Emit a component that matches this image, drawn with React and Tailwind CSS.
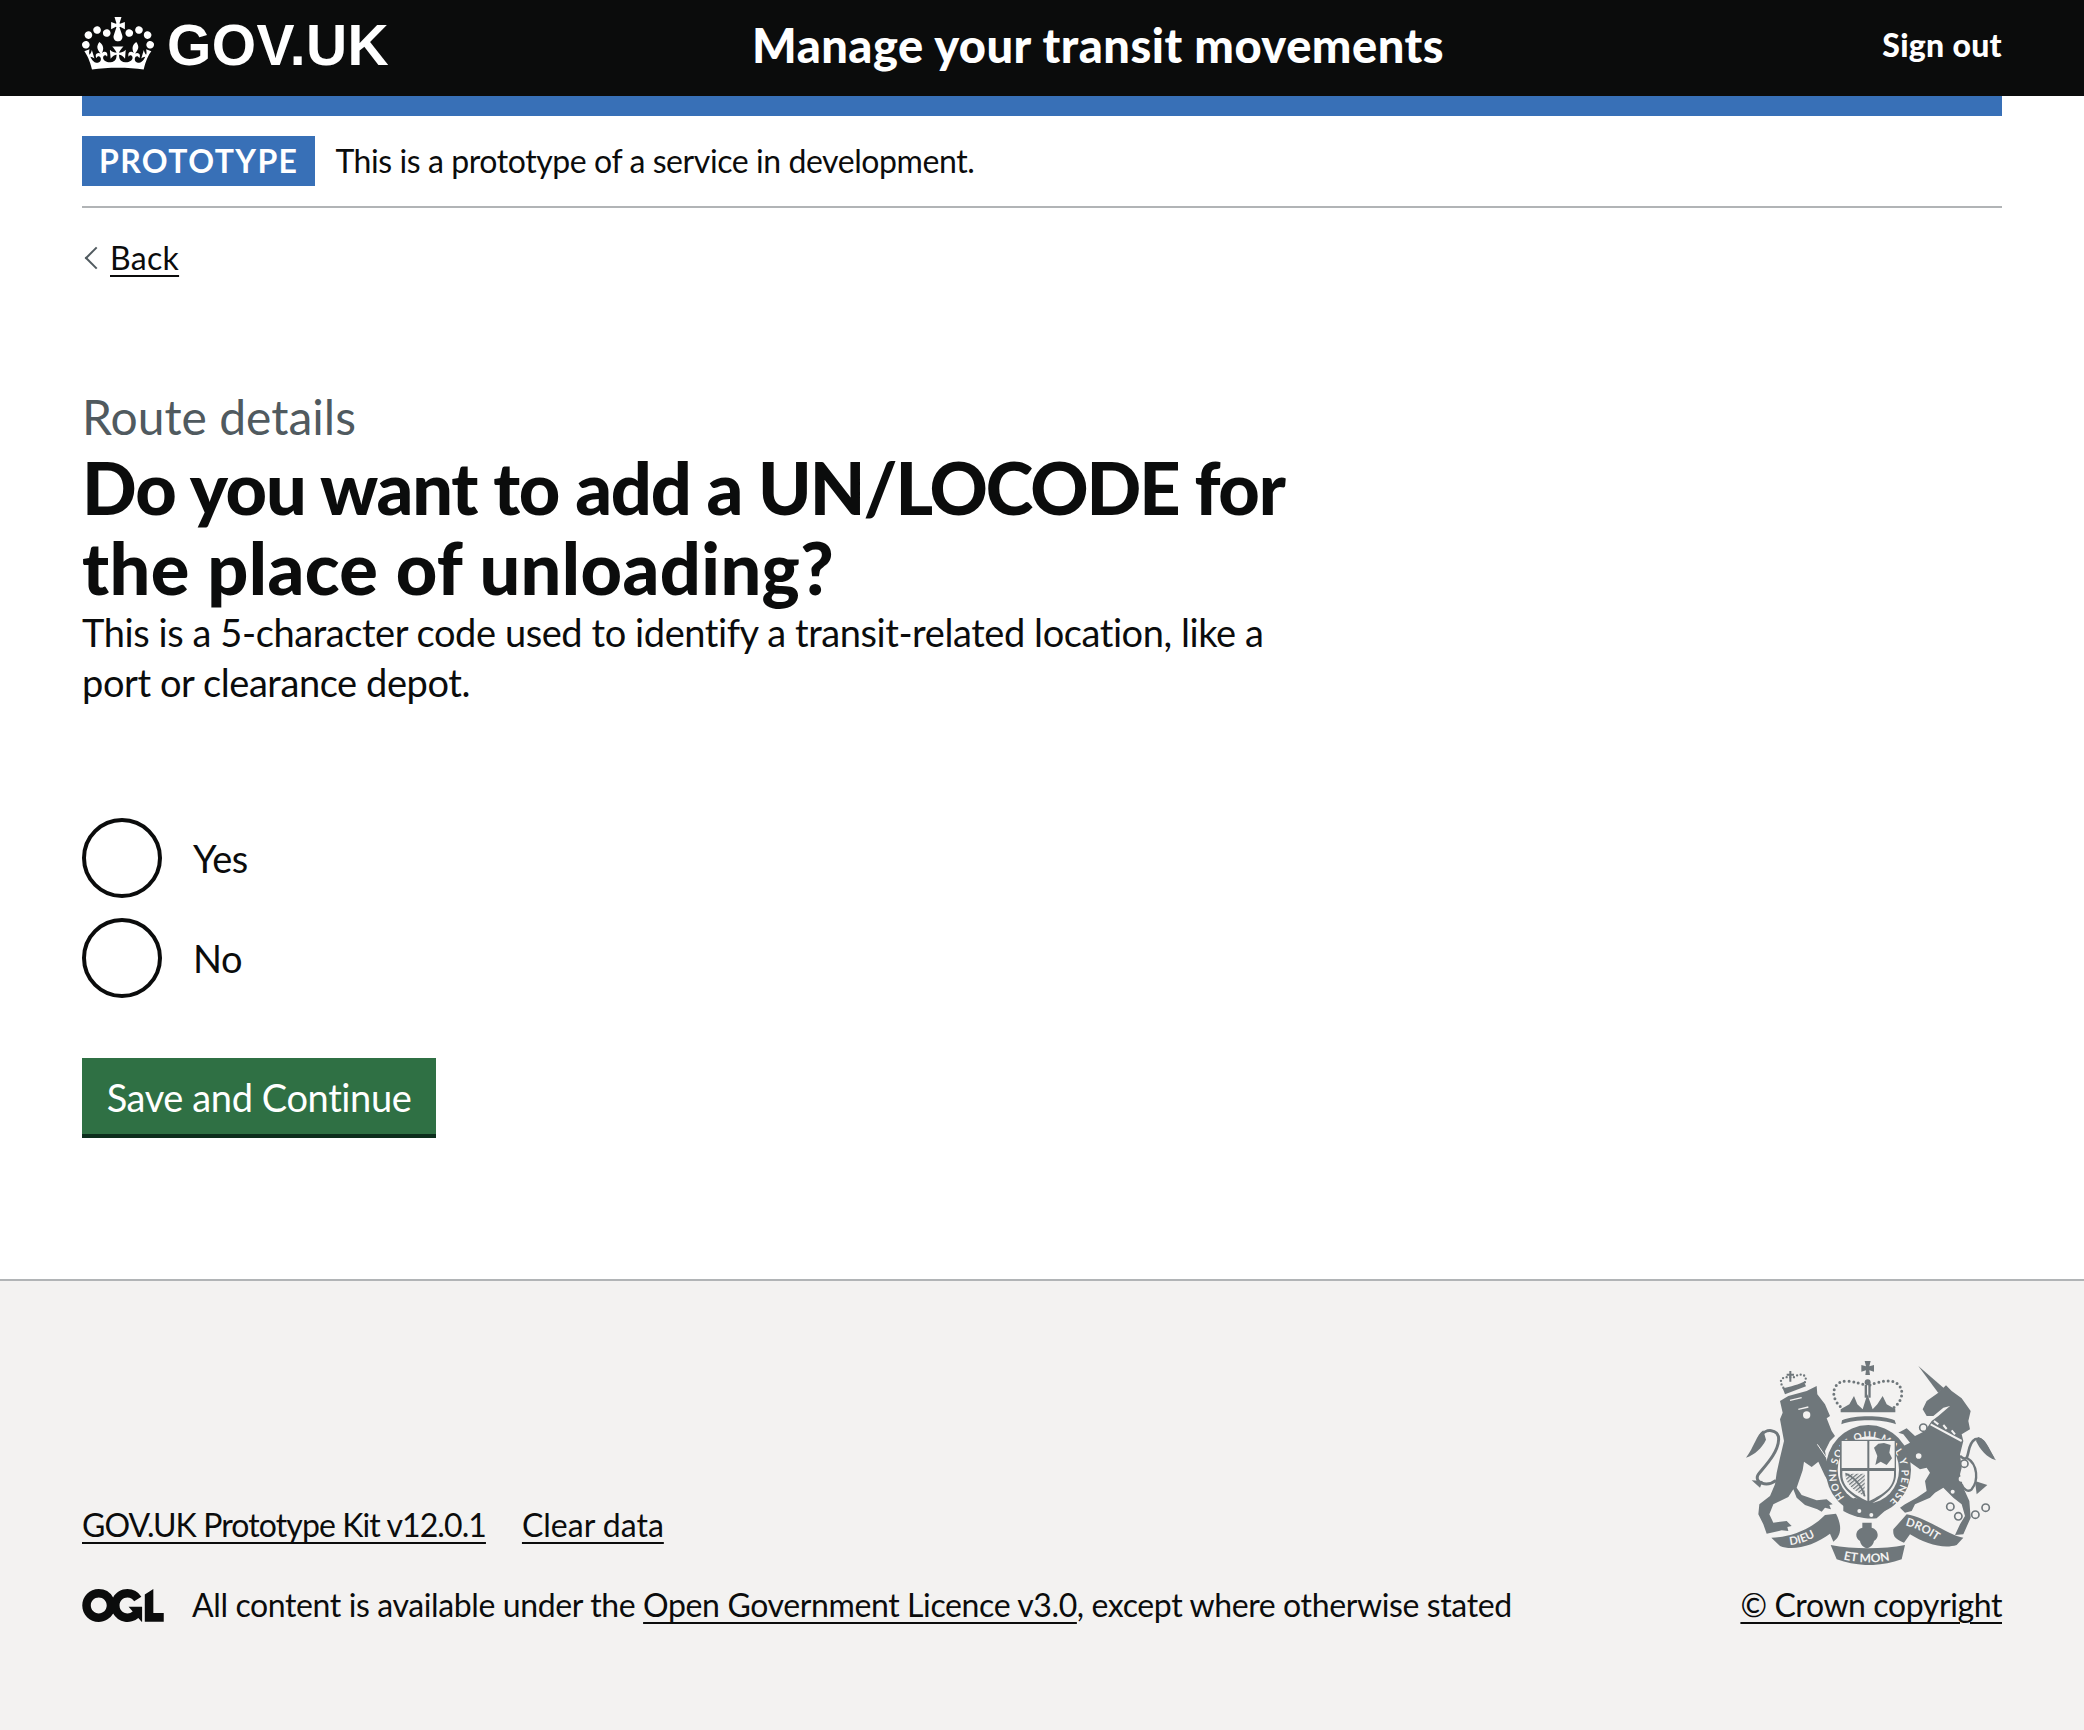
import React from "react";

const font = "font-['Lato','Noto_Sans',sans-serif]";
const link = "underline decoration-2 underline-offset-[5px]";

const Crown = () => (
  <svg viewBox="0 0 132 97" className="w-[72px] h-[53px] shrink-0 -mt-[3px]" fill="currentColor">
    <path fillRule="evenodd" d="M25 30.2c3.5 1.5 7.7-.2 9.1-3.7 1.5-3.6-.2-7.8-3.9-9.2-3.6-1.4-7.6.3-9.1 3.9-1.4 3.5.3 7.5 3.9 9zM9 39.5c3.6 1.5 7.8-.2 9.2-3.7 1.5-3.6-.2-7.8-3.9-9.1-3.6-1.5-7.6.2-9.1 3.8-1.4 3.5.3 7.5 3.8 9zM4.4 57.2c3.5 1.5 7.7-.2 9.1-3.8 1.5-3.6-.2-7.7-3.9-9.1-3.5-1.5-7.6.3-9.1 3.8-1.4 3.5.3 7.6 3.9 9.1zm38.3-21.4c3.5 1.5 7.7-.2 9.1-3.8 1.5-3.6-.2-7.7-3.9-9.1-3.6-1.5-7.6.3-9.1 3.8-1.3 3.6.4 7.7 3.9 9.1zm64.4-5.6c-3.6 1.5-7.8-.2-9.1-3.7-1.5-3.6.2-7.8 3.8-9.2 3.6-1.4 7.7.3 9.2 3.9 1.3 3.5-.4 7.5-3.9 9zm15.9 9.3c-3.6 1.5-7.7-.2-9.1-3.7-1.5-3.6.2-7.8 3.7-9.1 3.6-1.5 7.7.2 9.2 3.8 1.5 3.5-.3 7.5-3.8 9zm4.7 17.7c-3.6 1.5-7.8-.2-9.2-3.8-1.5-3.6.2-7.7 3.9-9.1 3.6-1.5 7.7.3 9.2 3.8 1.3 3.5-.4 7.6-3.9 9.1zM89.3 35.8c-3.6 1.5-7.8-.2-9.2-3.8-1.4-3.6.2-7.7 3.9-9.1 3.6-1.5 7.7.3 9.2 3.8 1.4 3.6-.3 7.7-3.9 9.1zM69.7 17.7l8.9 4.7V9.3l-8.9 2.8c-.2-.3-.5-.6-.9-.9L72.4 0H59.6l3.5 11.2c-.3.3-.6.5-.9.9l-8.8-2.8v13.1l8.8-4.7c.3.3.6.7.9.9l-5 15.4v.1c-.2.8-.4 1.6-.4 2.4 0 4.1 3.1 7.5 7 8.1h.2c.3 0 .7.1 1 .1.4 0 .7 0 1-.1h.2c4-.6 7.1-4.1 7.1-8.1 0-.8-.1-1.7-.4-2.4V34l-5.1-15.4c.4-.2.7-.6 1-.9zM66 92.8c16.9 0 32.8 1.1 47.1 3.2 4-16.9 8.9-26.7 14-33.5l-9.6-3.4c1 4.9 1.1 7.2 0 10.2-1.5-1.4-3-4.3-4.2-8.7L108.6 76c2.8-2 5-3.2 7.5-3.3-4.4 9.4-10 11.9-13.6 11.2-4.3-.8-6.3-4.6-5.6-7.9 1-4.7 5.7-5.9 8-.5 4.3-8.7-3-11.4-7.6-8.8 7.1-7.2 7.9-13.5 2.1-21.1-8 6.1-8.1 12.3-4.5 20.8-4.7-5.4-12.1-2.5-9.5 6.2 3.4-5.2 7.9-2 7.2 3.1-.6 4.3-6.4 7.8-13.5 7.2-10.3-.9-10.9-8-11.2-13.8 2.5-.5 7.1 1.8 11 7.3L80.2 60c-4.1 4.4-8 5.3-12.3 5.4 1.4-4.4 8-11.6 8-11.6H55.5s6.4 7.2 7.9 11.6c-4.2-.1-8-1-12.3-5.4l1.4 16.4c3.9-5.5 8.5-7.7 10.9-7.3-.3 5.8-.9 12.8-11.1 13.8-7.2.6-12.9-2.9-13.5-7.2-.7-5 3.8-8.3 7.1-3.1 2.7-8.7-4.6-11.6-9.4-6.2 3.7-8.5 3.6-14.7-4.6-20.8-5.8 7.6-5 13.9 2.2 21.1-4.7-2.6-11.9.1-7.7 8.8 2.3-5.5 7.1-4.2 8.1.5.7 3.3-1.3 7.1-5.7 7.9-3.5.7-9-1.8-13.5-11.2 2.5.1 4.7 1.3 7.5 3.3l-4.7-15.4c-1.2 4.4-2.7 7.2-4.3 8.7-1.1-3-.9-5.3 0-10.2l-9.5 3.4c5 6.9 9.9 16.7 14 33.5 14.8-2.1 30.8-3.2 47.7-3.2z" />
  </svg>
);

const Ogl = () => (
  <svg viewBox="0 0 483.2 195.7" className="w-[82px] h-[33px] shrink-0" fill="#0b0c0c">
    <path d="M421.5 142.8V.1l-50.7 32.3v161.1h112.4v-50.7zm-122.3-9.6A47.12 47.12 0 0 1 221 97.8c0-26 21.1-47.1 47.1-47.1 16.7 0 31.4 8.7 39.7 21.8l42.7-27.2A97.63 97.63 0 0 0 268.1 0c-36.5 0-68.3 20.1-85.1 49.7A98 98 0 0 0 97.8 0C43.9 0 0 43.9 0 97.8s43.9 97.8 97.8 97.8c36.5 0 68.3-20.1 85.1-49.7a97.76 97.76 0 0 0 149.6 25.4l19.4 22.2h3v-87.8h-80l24.3 27.5zM97.8 145c-26 0-47.1-21.1-47.1-47.1s21.1-47.1 47.1-47.1 47.2 21 47.2 47S123.8 145 97.8 145" />
  </svg>
);

// small stacked lions on the shield
const Passant = ({ x, y }) => (
  <g fill="#6f777b">
    {[0, 25, 50].map((d) => (
      <path key={d} d={`M${x} ${y + d + 6} L${x + 10} ${y + d + 2} L${x + 14} ${y + d + 7} L${x + 40} ${y + d + 4} L${x + 56} ${y + d} L${x + 52} ${y + d + 8} L${x + 56} ${y + d + 19} L${x + 46} ${y + d + 14} L${x + 24} ${y + d + 15} L${x + 14} ${y + d + 21} L${x + 10} ${y + d + 12} Z`} />
    ))}
  </g>
);

// royal arms, traced by eye; coordinates are those of the 3x crop
const Crest = () => {
  const g = "#6f777b";
  const bg = "#f3f2f1";
  const rings = [[580, 260], [566, 345], [703, 368], [661, 497], [685, 526], [736, 521], [767, 500]];
  return (
    <svg viewBox="48 60 750 612" className="w-[250px] h-[204px]">
      <defs>
        <pattern id="hatch" width="9" height="9" patternUnits="userSpaceOnUse" patternTransform="rotate(-40)">
          <rect width="9" height="4" fill={g} />
        </pattern>
        <path id="garter" d="M352 478 A 98 106 0 1 1 482 478" />
        <path id="dieu" d="M180 612 C 215 610, 255 592, 292 562" />
        <path id="mon" d="M328 652 C 380 668, 450 668, 503 652" />
        <path id="droit" d="M526 553 C 565 562, 600 585, 645 615" />
      </defs>

      {/* lion */}
      <path fill={g} d="M150 180 L175 165 L230 150 L260 135 L262 160 L285 190 L300 225 L290 232 L305 270 L315 285 L300 300 L285 330 L290 360 L310 385 L322 410 L312 425 L295 420 L285 405 L265 362 L245 378 L222 362 L218 388 L200 440 L215 462 L260 478 L290 475 L308 490 L298 492 L303 505 L285 500 L275 512 L262 505 L225 492 L200 470 L190 445 L175 468 L130 490 L118 520 L130 545 L170 540 L185 555 L172 558 L175 570 L155 568 L110 578 L100 550 L85 520 L88 490 L120 465 L135 430 L140 395 L150 350 L162 300 L150 235 L158 215 Z" />
      <path fill="none" stroke={g} strokeWidth="9" d="M138 418 C 110 440, 70 425, 85 400 C 105 375, 145 335, 146 295 C 146 262, 105 262, 92 285" />
      <path fill={g} d="M100 268 C 80 280, 72 320, 48 350 C 75 340, 95 322, 108 296 Z" />
      <path fill={g} d="M98 420 L65 418 L90 440 Z" />
      <circle cx="230" cy="222" r="11" fill={bg} />
      <path fill="none" stroke={bg} strokeWidth="4" d="M180 178 L215 170 M205 205 L235 198" />
      <path fill="none" stroke={bg} strokeWidth="3" d="M262 310 L320 395" />
      {/* lion crown */}
      <path fill={g} d="M165 160 L228 136 L222 122 C 210 128, 180 138, 158 142 Z" />
      <path fill="none" stroke={g} strokeWidth="7" strokeLinecap="round" strokeDasharray="0 11" d="M160 140 C 140 110, 165 105, 190 110 C 215 90, 238 105, 222 128" />
      <path fill={g} d="M178 90 H184 V98 H192 V104 H184 V122 H178 V104 H170 V98 H178 Z" />

      {/* unicorn */}
      <path fill={g} d="M565 75 L642 142 L625 156 Z" />
      <path fill={g} d="M625 155 L648 133 L665 150 L695 172 L722 210 L715 240 L720 265 L695 280 L700 300 L690 340 L695 380 L690 400 L700 440 L718 480 L722 530 L700 580 L675 582 L690 550 L705 525 L695 490 L670 470 L640 440 L615 455 L600 470 L555 490 L545 510 L525 515 L510 500 L525 490 L560 470 L590 450 L585 420 L600 395 L590 380 L570 385 L535 360 L510 320 L540 305 L520 280 L505 275 L530 262 L555 285 L585 270 L605 240 L625 225 L660 195 L640 200 L610 225 L590 225 L578 205 L590 180 Z" />
      <path fill="none" stroke={bg} strokeWidth="6" d="M602 250 L695 300 M612 240 L625 250 M640 252 L650 264 M665 268 L675 280" />
      <path fill="none" stroke={g} strokeWidth="8" d="M690 345 C 725 375, 705 310, 735 295 C 760 285, 770 320, 790 352" />
      <path fill={g} d="M745 288 C 770 295, 780 335, 798 358 C 770 350, 750 325, 738 300 Z" />
      <path fill="none" stroke={g} strokeWidth="7" d="M710 350 C 745 370, 745 420, 725 445 C 715 455, 700 445, 695 430" />
      <path fill={g} d="M735 420 L772 432 L740 460 Z" />
      <circle cx="694" cy="414" r="8" fill={bg} />
      <circle cx="668" cy="452" r="6" fill={bg} />
      {rings.map(([x, y], i) => (
        <circle key={i} cx={x} cy={y} r="11" fill={bg} stroke={g} strokeWidth="5" />
      ))}

      {/* royal crown */}
      <path fill={g} d="M404 60 H422 L418 76 L432 72 V92 L418 88 L420 102 H406 L408 88 L394 92 V72 L408 76 Z" />
      <rect x="404" y="132" width="7" height="38" fill={g} />
      <rect x="415" y="132" width="7" height="38" fill={g} />
      <circle cx="413" cy="124" r="9" fill={g} />
      <path fill="none" stroke={g} strokeWidth="9" strokeLinecap="round" strokeDasharray="0 14" d="M342 205 C 295 175, 305 118, 352 120 C 375 122, 392 128, 406 132 M420 132 C 435 126, 455 120, 475 120 C 522 120, 532 175, 484 205" />
      <path fill={g} d="M332 205 L358 190 L372 165 L382 190 L398 205 L412 160 L428 205 L442 190 L458 165 L470 190 L496 205 L496 214 L332 214 Z" />
      <path fill={g} d="M336 238 C 375 222, 455 222, 494 238 L498 250 C 455 234, 375 234, 334 250 Z" />

      {/* garter and shield */}
      <ellipse cx="415" cy="386" rx="128" ry="134" fill={g} />
      <ellipse cx="415" cy="386" rx="92" ry="100" fill={bg} />
      <text fill={bg} fontSize="30" fontWeight="700" fontFamily="Lato, sans-serif">
        <textPath href="#garter" textLength="490" startOffset="12">HONI SOIT QUI MAL Y PENSE</textPath>
      </text>
      <path fill={g} d="M330 296 H498 V400 C 498 445, 455 470, 415 494 C 375 470, 330 445, 330 400 Z" />
      <path fill={bg} d="M335 300 H412 V381 H335 Z M418 300 H494 V381 H418 Z M337 390 H412 V480 C 370 460, 337 440, 337 400 Z M418 390 H492 V400 C 492 440, 460 460, 418 480 Z" />
      <Passant x="346" y="304" />
      <Passant x="428" y="394" />
      <path fill={g} d="M432 320 L445 308 L462 306 L482 312 L478 335 L486 352 L470 372 L452 362 L436 372 L442 345 Z" />
      <path fill="url(#hatch)" d="M346 398 H404 V466 C 370 446, 346 430, 346 398 Z" />
      <path fill="none" stroke={g} strokeWidth="5" d="M346 398 C 370 405, 400 440, 404 466" />

      {/* garter buckle */}
      <path fill={g} d="M340 488 L375 470 L470 505 L440 532 C 405 536, 365 525, 340 510 Z" />
      <circle cx="388" cy="510" r="6" fill={bg} />
      <circle cx="424" cy="522" r="6" fill={bg} />

      {/* motto ribbons */}
      <path fill={g} d="M124 590 C 170 590, 240 570, 285 522 L318 518 C 340 560, 330 590, 310 602 L300 578 C 255 612, 190 632, 150 615 Z" />
      <path fill={g} d="M700 590 C 660 585, 590 530, 530 520 L490 565 C 488 585, 495 595, 522 605 L540 580 C 585 608, 640 625, 680 612 Z" />
      <path fill={g} d="M302 612 C 370 625, 460 625, 525 612 L515 655 C 450 678, 385 678, 320 655 Z" />
      <text fill={bg} fontSize="34" fontWeight="700" fontFamily="Lato, sans-serif">
        <textPath href="#dieu">DIEU</textPath>
      </text>
      <text fill={bg} fontSize="36" fontWeight="700" fontFamily="Lato, sans-serif">
        <textPath href="#mon" startOffset="12">ET MON</textPath>
      </text>
      <text fill={bg} fontSize="34" fontWeight="700" fontFamily="Lato, sans-serif">
        <textPath href="#droit">DROIT</textPath>
      </text>
      {/* fleur under the shield */}
      <path fill={g} d="M397 545 H425 V560 C 445 565, 450 590, 432 600 C 430 612, 420 620, 411 622 C 402 620, 392 612, 390 600 C 372 590, 377 565, 397 560 Z" />
    </svg>
  );
};

const Radio = ({ label }) => (
  <label className="flex items-center gap-[31px]">
    <span className="size-[80px] rounded-full border-[4px] border-[#0b0c0c] bg-white" />
    <span className="text-[38px] leading-[50px] tracking-[-0.4px] text-[#0b0c0c]">{label}</span>
  </label>
);

export default function App() {
  return (
    <div className={`${font} min-h-[1730px] flex flex-col bg-white text-[#0b0c0c]`}>
      <header className="h-[96px] pb-[6px] bg-[#0b0c0c] text-white flex items-center px-[82px]">
        <a className="flex items-center gap-[13px] w-[306px]">
          <Crown />
          <span className="font-['Liberation_Sans',sans-serif] font-bold text-[57px] leading-[60px] tracking-[0.4px]">GOV.UK</span>
        </a>
        <div className="ml-[364px] text-[47px] leading-[50px] font-black tracking-[0.5px]">Manage your transit movements</div>
        <a className="ml-auto text-[32px] leading-[40px] font-black tracking-[0.3px]">Sign out</a>
      </header>

      <div className="mx-[82px] h-[20px] bg-[#3870b7]" />

      <main className="mx-[82px]">
        <div className="flex items-center gap-[20px] py-[20px] border-b-2 border-[#b1b4b6]">
          <strong className="h-[50px] px-[17px] flex items-center bg-[#3870b7] text-white text-[32px] font-bold tracking-[1.4px] uppercase">Prototype</strong>
          <span className="text-[32px] leading-[40px] tracking-[-0.42px]">This is a prototype of a service in development.</span>
        </div>

        <div className="mt-[30px] flex items-center gap-[6px] pl-[6px]">
          <span className="size-[16px] rotate-45 border-l-2 border-b-2 border-[#505a5f]" />
          <a className={`text-[32px] leading-[40px] tracking-[0.3px] ${link}`}>Back</a>
        </div>

        <div className="mt-[109px] w-[1240px]">
          <div className="text-[48px] leading-[60px] text-[#505a5f]">Route details</div>
          <h1 className="text-[72px] leading-[80px] font-black">
            <span className="tracking-[-1.2px]">Do you want to add a </span>
            <span className="tracking-[-2px]">UN/LOCODE</span>
            <span className="tracking-[-1.3px]"> for </span>
            <span className="tracking-[0.4px]">the place of unloading?</span>
          </h1>
          <p className="text-[38px] leading-[50px] tracking-[-0.42px]">This is a 5-character code used to identify a transit-related location, like a port or clearance depot.</p>
        </div>

        <div className="mt-[111px] flex flex-col gap-[20px]">
          <Radio label="Yes" />
          <Radio label="No" />
        </div>

        <button className="mt-[60px] h-[80px] w-[354px] pb-[2px] bg-[#2f7044] shadow-[inset_0_-4px_0_#0c2d1c] text-white text-[38px] leading-[50px] tracking-[-0.4px]">Save and Continue</button>
      </main>

      <footer className="mt-[141px] flex-1 border-t-2 border-[#b1b4b6] bg-[#f3f2f1] px-[82px] flex items-end justify-between pb-[105px]">
        <div>
          <div className="flex gap-[36px] text-[32px] leading-[40px]">
            <a className={`${link} tracking-[-0.9px]`}>GOV.UK Prototype Kit v12.0.1</a>
            <a className={link}>Clear data</a>
          </div>
          <div className="mt-[40px] flex items-center gap-[28px] text-[32px] leading-[40px] tracking-[-0.38px]">
            <Ogl />
            <span>
              All content is available under the{" "}
              <a className={link}>Open Government Licence v3.0</a>
              , except where otherwise stated
            </span>
          </div>
        </div>
        <div className="flex flex-col items-center gap-[20px]">
          <Crest />
          <a className={`text-[32px] leading-[40px] tracking-[-0.4px] ${link}`}>© Crown copyright</a>
        </div>
      </footer>
    </div>
  );
}
